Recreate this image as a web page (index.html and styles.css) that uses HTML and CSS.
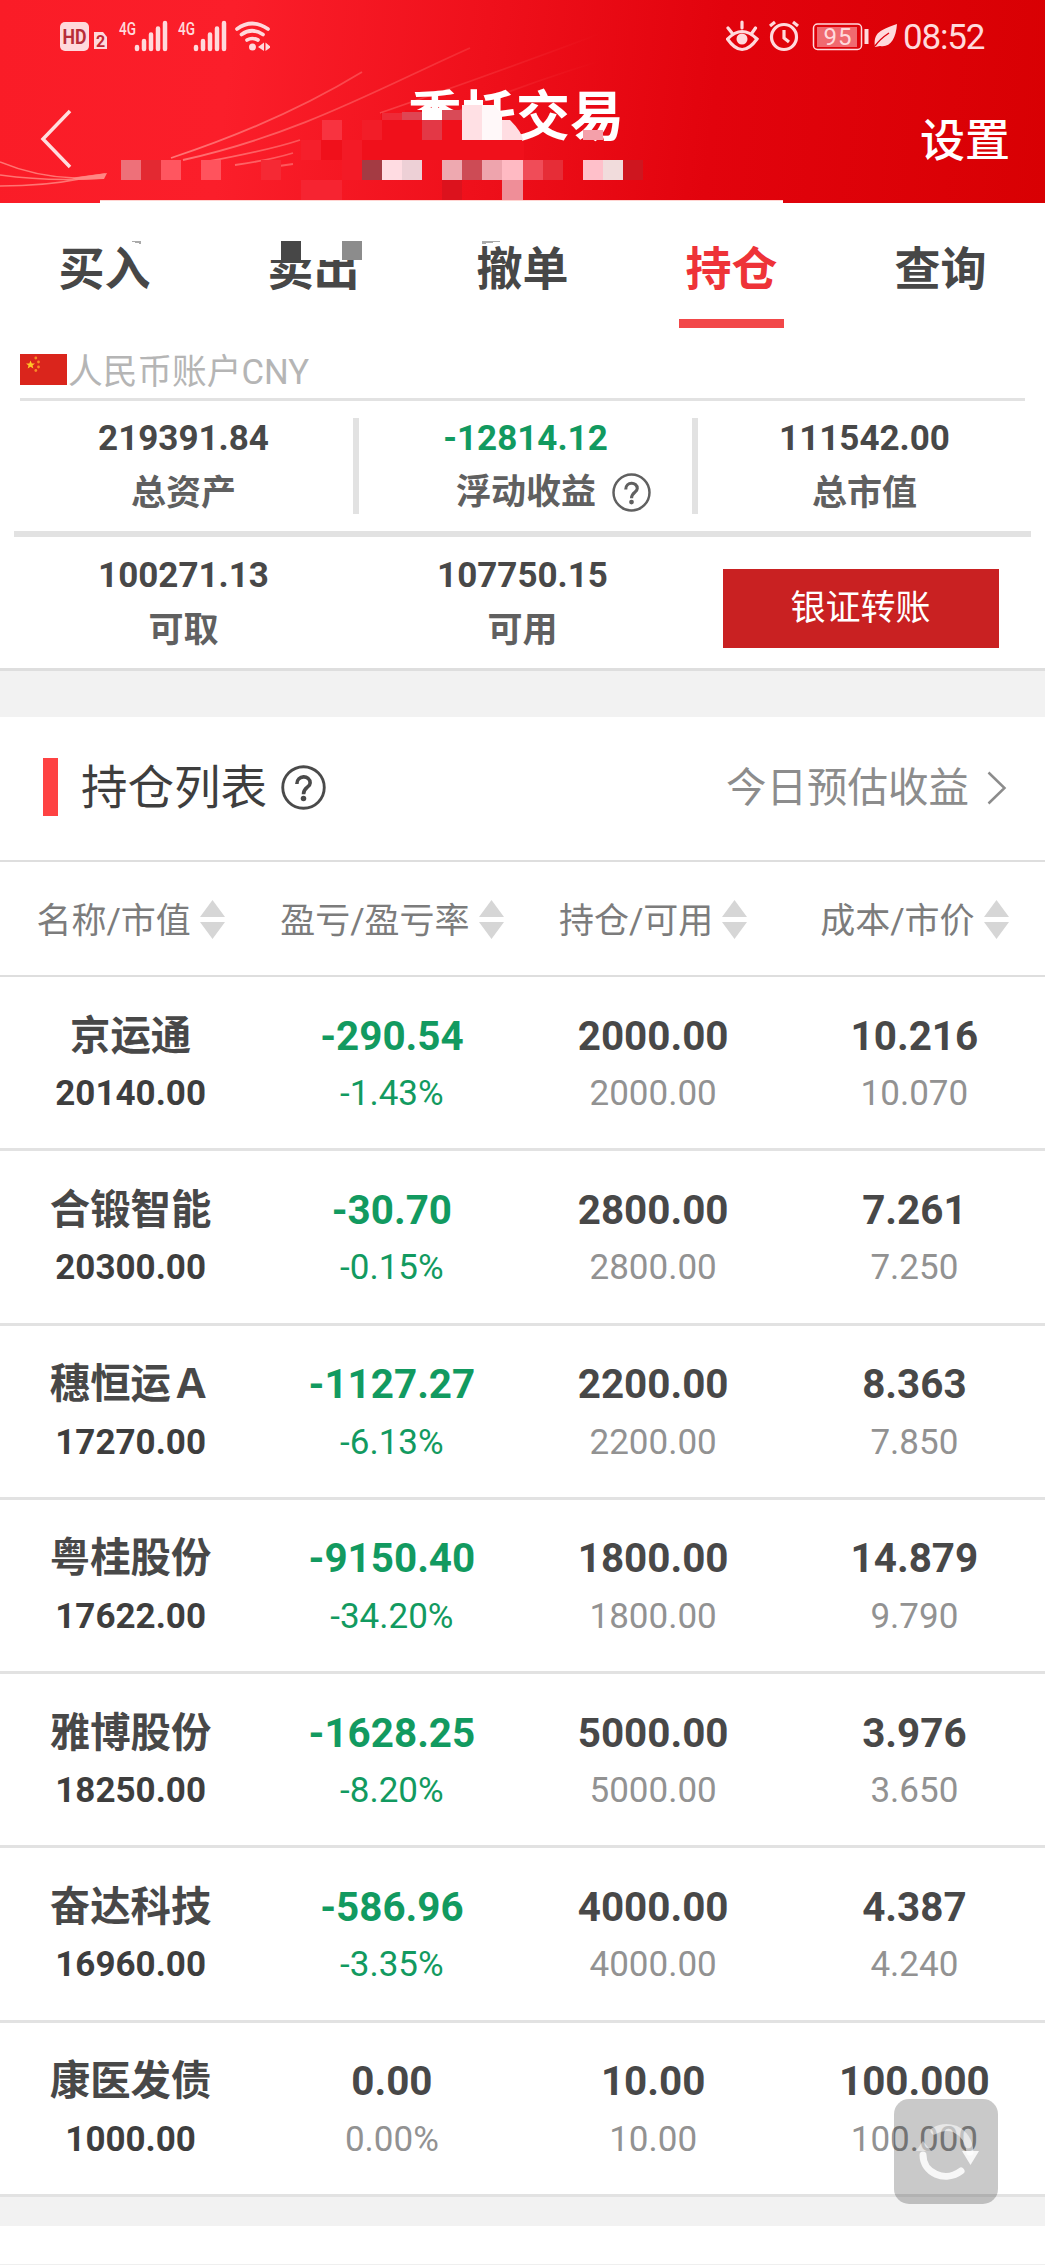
FILE: index.html
```html
<!DOCTYPE html>
<html lang="zh-CN">
<head>
<meta charset="utf-8">
<title>委托交易</title>
<link rel="stylesheet" href="styles.css">
</head>
<body>
<svg class="defs" width="0" height="0" aria-hidden="true">
  <symbol id="sort" viewBox="0 0 25 39"><path d="M12.500 0 25 17H0ZM0 22H25L12.500 39Z" fill="#d6d6d6"/></symbol>
  <symbol id="help" viewBox="0 0 44 44"><circle cx="22" cy="22" r="20.300" fill="none" stroke="currentColor" stroke-width="2.800"/><path d="M15.500 18.500C15.500 9.500 28.500 9.500 28.500 17.500C28.500 22 22 21.500 22 28.500" fill="none" stroke="currentColor" stroke-width="3.500"/><circle cx="22" cy="32.800" r="2.700" fill="currentColor"/></symbol>
</svg>
<header class="header">
  <svg class="header-art" viewBox="0 0 1045 203" width="1045" height="203">
    <defs><linearGradient id="fade" gradientUnits="userSpaceOnUse" x1="170" y1="0" x2="600" y2="0"><stop offset="0" stop-color="#ff8080" stop-opacity=".9"/><stop offset="1" stop-color="#ff6060" stop-opacity="0"/></linearGradient></defs>
    <g fill="none" stroke="url(#fade)" stroke-width="1.800">
      <path d="M171 158Q280 122 362 72"/><path d="M183 160C300 134 380 88 470 48"/><path d="M205 162Q270 150 300 140M235 165Q270 160 293 153M265 168L293 164"/><path d="M380 113Q490 75 610 30"/><path d="M460 110Q550 75 630 52"/>
    </g>
    <g fill="none" stroke="#ff7472" stroke-width="1.400">
      <path d="M0 162Q36 177 75 178L105 174M0 175Q50 182 104 178M0 186Q45 186 80 179"/>
    </g>
    <path d="M72 178 107 173 104 179 76 180Z" fill="#ff8683"/>
  </svg>
  <div class="status">
    <svg width="210" height="46" viewBox="60 10 210 46" fill="#ffd9dc">
      <rect x="60" y="22" width="29" height="29" rx="5"/>
      <text x="62.500" y="44" class="hd" textLength="24" lengthAdjust="spacingAndGlyphs">HD</text>
      <path d="M94 32H103L107 37V49H94Z"/>
      <text x="96" y="47" class="sim">2</text>
      <text x="119" y="34.500" class="net" textLength="17" lengthAdjust="spacingAndGlyphs">4G</text>
      <text x="178" y="34.500" class="net" textLength="17" lengthAdjust="spacingAndGlyphs">4G</text>
      <g stroke="#ffd9dc" stroke-width="4.500" stroke-linecap="round">
        <path d="M137 47V49M144 41V49M151 34.500V49M158 28.500V49M165 23V49M196 47V49M203 41V49M210 34.500V49M217 28.500V49M224 23V49"/>
      </g>
      <g fill="none" stroke="#ffd9dc" stroke-width="3.700" stroke-linecap="round"><path d="M237 29Q252 18 268 29M241.500 34.500Q252 27 263 34.500M247 40Q252 37 258 40"/></g>
      <circle cx="252.500" cy="47" r="3.500"/><path d="M264 42.500V51L258 47ZM265.500 42.500V51L271 47Z"/>
    </svg>
    <div class="status-right">
      <svg width="171" height="46" viewBox="726 10 171 46" fill="none" stroke="#ffdadd" stroke-width="3.200">
        <path d="M727.500 39Q742 24 757 39Q742 60 727.500 39ZM728 28 732 33M742 22V28M755.500 28 752 33" stroke-linecap="round"/><circle cx="742" cy="39" r="5.500" fill="#ffdadd" stroke="none"/>
        <circle cx="784" cy="37" r="12.500"/><path d="M784 30V38L789 42M770 26 775 22M793 22 798 26"/>
        <rect x="813.500" y="24" width="48" height="25.500" rx="4" stroke-width="1.500"/><rect x="817" y="27" width="40" height="20" fill="#f06a70" stroke="none"/>
        <path d="M866.500 29V44" stroke-width="4"/>
        <text x="823.500" y="44.500" class="battery">95</text>
        <path d="M875 47C873 32 881 30 897 24C896 39 890 48 880 46Z" fill="#ffdadd" stroke="none"/><path d="M875 46Q880 39 889 33" stroke="#dc000c" stroke-width="1.400"/>
      </svg>
      <span class="time">08:52</span>
    </div>
  </div>
  <div class="navbar">
    <svg class="back" width="32" height="60" viewBox="0 0 32 60"><path d="M30 2 3 30 30 58" fill="none" stroke="#ffdede" stroke-width="3.500"/></svg>
    <h1 class="title">委托交易</h1>
    <span class="settings">设置</span>
  </div>
  <svg class="mosaic" viewBox="0 0 1045 270" width="1045" height="270" shape-rendering="crispEdges">
    <path d="M381 113H482V140H522L524 144V160H301V140H381Z" fill="#f0101b"/>
    <path d="M405 110H462V114H405Z" fill="#f0101b"/>
    <path d="M382 113H422V120H382Z" fill="#ee2a37"/><path d="M402 112H422V120H402Z" fill="#df4553"/>
    <path d="M422 108H442V120H422Z" fill="#fff"/><path d="M442 110H462V120H442Z" fill="#d94a57"/>
    <path d="M422 120H442V140H422Z" fill="#e33846"/><path d="M322 120H342V140H322Z" fill="#f83340"/><path d="M362 120H382V140H362Z" fill="#f21d28"/>
    <path d="M462 105H482V140H462Z" fill="#ffe0e4"/><path d="M482 105H493L502 114V140H482Z" fill="#fff8f9"/>
    <path d="M502 120H510Q522 132 523 140H502Z" fill="#ffdde2" shape-rendering="auto"/>
    <path d="M583 130H603V140H583Z" fill="#f4a0aa"/>
    <path d="M301 140H321V160H301Z" fill="#f51f2b"/><path d="M342 140H362V160H342ZM342 160H362V180H342Z" fill="#f31a26"/>
    <path d="M121 160H141V180H121Z" fill="#ee7079"/><path d="M141 160H161V180H141Z" fill="#e32932"/><path d="M161 160H181V180H161Z" fill="#ff5660"/><path d="M201 160H221V180H201Z" fill="#ff535d"/><path d="M261 160H281V180H261Z" fill="#f52934"/>
    <path d="M362 160H382V180H362Z" fill="#a43b43"/><path d="M382 160H402V180H382Z" fill="#ffdce2"/><path d="M402 160H422V180H402Z" fill="#edd0d6"/>
    <path d="M442 160H462V180H442Z" fill="#eea9b0"/><path d="M462 160H482V180H462Z" fill="#cd4b55"/><path d="M482 160H502V180H482Z" fill="#eea4ad"/><path d="M502 160H523V180H502Z" fill="#ffbac3"/>
    <path d="M523 160H543V180H523Z" fill="#f04c58"/><path d="M543 160H563V180H543Z" fill="#e62d37"/>
    <path d="M583 160H603V180H583Z" fill="#ffc0ca"/><path d="M603 160H623V180H603Z" fill="#f1dcdc"/><path d="M623 160H643V180H623Z" fill="#ce161f"/>
    <path d="M301 180H342V200H301Z" fill="#f62431"/><path d="M442 180H462V200H442Z" fill="#dc121d"/><path d="M502 180H523V200H502Z" fill="#ef8e98"/>
    <path d="M100 200H783V204H100Z" fill="#fff"/><path d="M100 200H783V201H100Z" fill="#ffd5d2"/>
    <path d="M270 241H362V260H270Z" fill="#fff"/><path d="M281 241H301V260H281Z" fill="#474747"/><path d="M342 241H362V260H342Z" fill="#8c8c8c"/>
    <path d="M130 241H141V244ZM482 241H503L482 244Z" fill="#aaa"/>
  </svg>
</header>
<nav class="tabs">
  <a class="tab">买入</a><a class="tab">卖出</a><a class="tab">撤单</a><a class="tab active">持仓</a><a class="tab">查询</a>
</nav>
<section class="account">
  <div class="currency">
    <svg class="flag" width="47" height="31" viewBox="0 0 47 31"><path d="M0 0H47V31H0Z" fill="#da251c"/><path d="M10.500 6.500 11.800 9.500 15 9.600 12.500 11.600 13.400 14.500 10.500 12.800 7.700 14.500 8.500 11.600 6 9.600 9.300 9.500Z" fill="#ffc728"/><g fill="#f98a26"><circle cx="15.800" cy="4" r="1.400"/><circle cx="18.500" cy="8" r="1.400"/><circle cx="18.500" cy="13" r="1.400"/><circle cx="15.800" cy="16.500" r="1.400"/></g></svg>
    <span>人民币账户CNY</span>
  </div>
  <div class="summary first">
    <div class="stat"><b>219391.84</b><span>总资产</span></div>
    <i class="divider"></i>
    <div class="stat"><b class="down">-12814.12</b><span class="with-help">浮动收益<svg class="help-small"><use href="#help"/></svg></span></div>
    <i class="divider"></i>
    <div class="stat"><b>111542.00</b><span>总市值</span></div>
  </div>
  <div class="summary second">
    <div class="stat"><b>100271.13</b><span>可取</span></div>
    <div class="stat"><b>107750.15</b><span>可用</span></div>
    <div class="stat"><button class="transfer">银证转账</button></div>
  </div>
</section>
<div class="gap wide"></div>
<section class="holdings">
  <div class="list-head">
    <i class="mark"></i><h2>持仓列表</h2><svg class="help"><use href="#help"/></svg>
    <a class="estimate">今日预估收益<svg width="20" height="34" viewBox="0 0 20 34"><path d="M1.500 1.500 17.500 17 1.500 32.500" fill="none" stroke="#8c8c8c" stroke-width="2.500"/></svg></a>
  </div>
  <div class="columns">
    <span>名称/市值<svg class="sort"><use href="#sort"/></svg></span>
    <span>盈亏/盈亏率<svg class="sort"><use href="#sort"/></svg></span>
    <span>持仓/可用<svg class="sort"><use href="#sort"/></svg></span>
    <span>成本/市价<svg class="sort"><use href="#sort"/></svg></span>
  </div>
  <div class="row"><div class="cell name"><b>京运通</b><span>20140.00</span></div><div class="cell down"><b>-290.54</b><span>-1.43%</span></div><div class="cell"><b>2000.00</b><span>2000.00</span></div><div class="cell"><b>10.216</b><span>10.070</span></div></div>
  <div class="row"><div class="cell name"><b>合锻智能</b><span>20300.00</span></div><div class="cell down"><b>-30.70</b><span>-0.15%</span></div><div class="cell"><b>2800.00</b><span>2800.00</span></div><div class="cell"><b>7.261</b><span>7.250</span></div></div>
  <div class="row"><div class="cell name"><b>穗恒运Ａ</b><span>17270.00</span></div><div class="cell down"><b>-1127.27</b><span>-6.13%</span></div><div class="cell"><b>2200.00</b><span>2200.00</span></div><div class="cell"><b>8.363</b><span>7.850</span></div></div>
  <div class="row"><div class="cell name"><b>粤桂股份</b><span>17622.00</span></div><div class="cell down"><b>-9150.40</b><span>-34.20%</span></div><div class="cell"><b>1800.00</b><span>1800.00</span></div><div class="cell"><b>14.879</b><span>9.790</span></div></div>
  <div class="row"><div class="cell name"><b>雅博股份</b><span>18250.00</span></div><div class="cell down"><b>-1628.25</b><span>-8.20%</span></div><div class="cell"><b>5000.00</b><span>5000.00</span></div><div class="cell"><b>3.976</b><span>3.650</span></div></div>
  <div class="row"><div class="cell name"><b>奋达科技</b><span>16960.00</span></div><div class="cell down"><b>-586.96</b><span>-3.35%</span></div><div class="cell"><b>4000.00</b><span>4000.00</span></div><div class="cell"><b>4.387</b><span>4.240</span></div></div>
  <div class="row"><div class="cell name"><b>康医发债</b><span>1000.00</span></div><div class="cell"><b>0.00</b><span>0.00%</span></div><div class="cell"><b>10.00</b><span>10.00</span></div><div class="cell"><b>100.000</b><span>100.000</span></div></div>
</section>
<div class="gap"></div>
<div class="bottom"></div>
<button class="refresh" aria-label="刷新">
  <svg width="104" height="105" viewBox="0 0 104 105" fill="none" stroke="#fff" stroke-width="7" stroke-linecap="round">
    <path d="M40 32Q50 26 61 30Q75 37 76 53" opacity=".55"/>
    <path d="M68 52H85L76.500 66Z" fill="#fff" stroke="none" opacity=".85"/>
    <path d="M29 56C29 74 51 84 67 72" opacity=".85"/>
    <path d="M22 52H37L29 42Z" fill="#fff" stroke="none" opacity=".5"/>
  </svg>
</button>
</body>
</html>
```
FILE: styles.css
```css
* { box-sizing: border-box; }
body { margin: 0; width: 1045px; position: relative; background: #fff; color: #484848; font-family: Roboto, "Noto Sans CJK SC", sans-serif; }
h1, h2 { margin: 0; }
svg { display: block; flex: none; }
.defs { position: absolute; }

.header { position: relative; height: 203px; background: linear-gradient(96deg, #fa1c27 0%, #fb1e2a 22%, #ef101b 46%, #e2030d 68%, #d80003 100%); }
.header-art, .mosaic { position: absolute; left: 0; top: 0; }
.mosaic { z-index: 2; }
.status { position: relative; display: flex; justify-content: space-between; padding: 10px 59px 0 60px; height: 66px; }
.status-right { display: flex; gap: 6px; }
.time { font-size: 35px; line-height: 34px; padding-top: 11px; color: #ffdadd; width: 83px; letter-spacing: -1.2px; white-space: nowrap; }
.hd { font-size: 20px; font-weight: 700; fill: #b82d38; }
.sim { font-size: 16px; font-weight: 700; fill: #c22632; }
.net { font-size: 18px; font-weight: 500; }
.battery { font-size: 24px; fill: #ffdadd; stroke: none; letter-spacing: 1px; }
.navbar { position: relative; display: grid; grid-template-columns: 1fr auto 1fr; align-items: start; padding: 0 35px 0 40px; color: #fff; }
.back { margin-top: 43px; }
.title { font-size: 54px; font-weight: 700; line-height: 80px; margin-top: 12px; margin-left: -18px; }
.settings { justify-self: end; font-size: 45px; font-weight: 500; line-height: 60px; margin-top: 46px; }

.tabs { display: flex; height: 125px; padding-top: 31px; }
.tab { flex: 1; display: flex; flex-direction: column; align-items: center; font-size: 46px; font-weight: 700; line-height: 70px; color: #474747; }
.active { color: #ee3338; }
.active::after { content: ""; width: 105px; height: 9px; margin-top: 15px; background: #f24749; }

.account { height: 343px; border-bottom: 3px solid #dedede; }
.currency { display: flex; align-items: center; gap: 1px; height: 73px; margin: 0 20px; padding-top: 18px; border-bottom: 3px solid #e2e2e2; font-size: 34.700px; color: #b5b5b5; line-height: 50px; }
.flag { margin-top: -5px; }
.summary { display: grid; grid-template-columns: repeat(3, 1fr); height: 136px; margin: 0 14px; padding-top: 17px; border-bottom: 6px solid #e2e2e2; }
.summary.first { grid-template-columns: 339px 6px 333px 6px 333px; }
.divider { width: 6px; height: 96px; background: #e2e2e2; }
.stat { min-width: 0; display: flex; flex-direction: column; align-items: center; gap: 10px; font-size: 35px; }
.stat b { font-weight: 700; line-height: 42px; height: 40px; }
.stat span { line-height: 52px; height: 50px; font-weight: 700; color: #606060; }
.summary.second { height: 131px; padding-top: 18px; border-bottom: 0; }
.stat .with-help { display: flex; align-items: center; gap: 16px; margin-right: -56px; white-space: nowrap; }
.help-small { width: 39px; height: 39px; margin-top: -1px; }
.transfer { width: 276px; height: 79px; margin: 14px 2px 0 0; padding: 0; border: 0; background: #c92122; color: #fff; font: 400 35px/74px Roboto, "Noto Sans CJK SC", sans-serif; }
.stat .down, .cell.down b, .cell.down span { color: #129a60; }

.list-head { display: flex; align-items: center; height: 145px; padding: 0 38px 2px 43px; border-bottom: 2px solid #dedede; }
.mark { width: 15px; height: 58px; background: #fe4243; margin: -2px 23px 0 0; }
.list-head h2 { font-size: 46.500px; font-weight: 400; line-height: 70px; color: #3e3e3e; }
.help { width: 45px; height: 45px; margin-left: 14px; color: #4a4a4a; }
.estimate { display: flex; align-items: center; gap: 18px; margin-left: auto; font-size: 40.500px; line-height: 60px; color: #8c8c8c; }
.columns { display: grid; grid-template-columns: repeat(4, 1fr); height: 115px; padding-bottom: 2px; border-bottom: 2px solid #dedede; font-size: 35px; color: #7c7c7c; }
.columns span { display: flex; align-items: center; justify-content: center; gap: 9px; }
.sort { width: 25px; height: 39px; margin-top: 3px; }
.row { display: grid; grid-template-columns: repeat(4, 1fr); height: 174.280px; padding-top: 29.500px; border-bottom: 3px solid #e2e2e2; }
.cell { display: flex; flex-direction: column; align-items: center; gap: 2.500px; }
.cell b { font-size: 40.400px; font-weight: 700; line-height: 60px; }
.cell span { font-size: 35px; line-height: 50px; color: #929292; }
.cell.name span { font-weight: 700; color: #3e3e3e; }
.gap { height: 29px; background: #f2f2f2; }
.gap.wide { height: 46px; }
.bottom { height: 39px; border-bottom: 1px solid #efefef; }
.refresh { position: absolute; left: 894px; top: 2099px; width: 104px; height: 105px; padding: 0; border: 0; border-radius: 15px; background: rgba(0, 0, 0, .21); }
```
